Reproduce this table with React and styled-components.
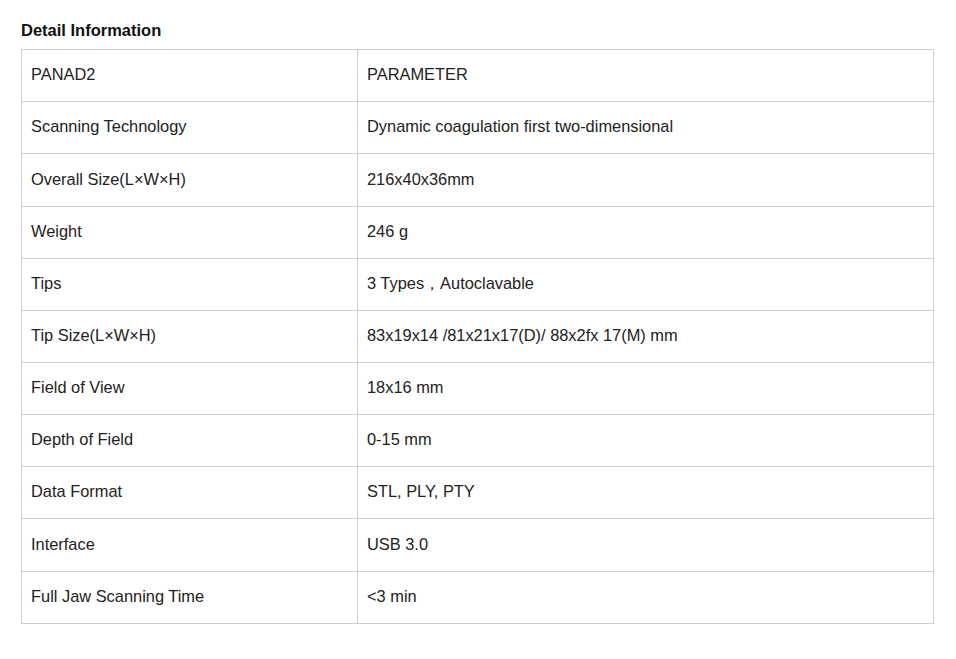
import React from "react";
import styled, { createGlobalStyle } from "styled-components";

const GlobalStyle = createGlobalStyle`
  body {
    margin: 0;
    background: #fff;
    font-family: "Liberation Sans", Arial, sans-serif;
    color: #222;
  }
`;

const Container = styled.div`
  padding: 20px 22px 0 21px;
  width: 913px;
`;

const Title = styled.h3`
  margin: 0 0 9px;
  font-size: 16.5px;
  font-weight: bold;
  color: #111;
  line-height: 20px;
`;

const Table = styled.table`
  width: 913px;
  border-collapse: collapse;
  table-layout: fixed;
`;

const Cell = styled.td`
  border: 1px solid #cfcfcf;
  padding: 0 9px 2px;
  height: ${(p) => (p.$tall ? "50px" : "49px")};
  font-size: 16.4px;
  line-height: 19px;
  color: #222;
  vertical-align: middle;
  width: ${(p) => (p.$first ? "317px" : "auto")};
`;

const rows = [
  ["PANAD2", "PARAMETER"],
  ["Scanning Technology", "Dynamic coagulation first two-dimensional"],
  ["Overall Size(L×W×H)", "216x40x36mm", true],
  ["Weight", "246 g"],
  ["Tips", "3 Types，Autoclavable"],
  ["Tip Size(L×W×H)", "83x19x14 /81x21x17(D)/ 88x2fx 17(M) mm"],
  ["Field of View", "18x16 mm"],
  ["Depth of Field", "0-15 mm"],
  ["Data Format", "STL, PLY, PTY"],
  ["Interface", "USB 3.0", true],
  ["Full Jaw Scanning Time", "<3 min"],
];

const App = () => {
  return (
    <Container>
      <GlobalStyle />
      <Title>Detail Information</Title>
      <Table>
        <tbody>
          {rows.map(([name, value, tall]) => (
            <tr key={name}>
              <Cell $first $tall={tall}>
                {name}
              </Cell>
              <Cell $tall={tall}>{value}</Cell>
            </tr>
          ))}
        </tbody>
      </Table>
    </Container>
  );
};

export default App;
